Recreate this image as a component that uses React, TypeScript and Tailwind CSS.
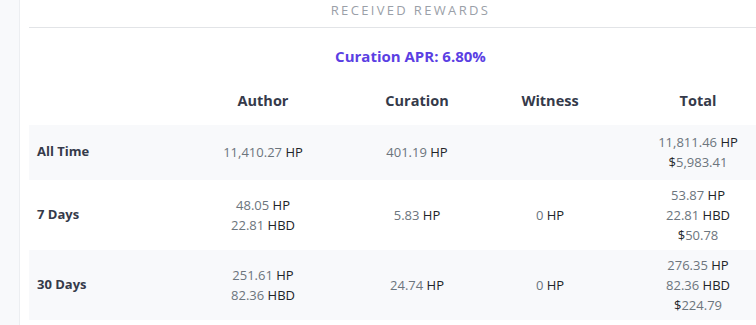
const rows = [
  {
    label: "All Time",
    h: "h-[55px]",
    bg: "bg-[#f8f9fb]",
    author: [["11,410.27", "HP"]],
    curation: [["401.19", "HP"]],
    witness: [],
    total: [["11,811.46", "HP"], ["$", "5,983.41"]],
  },
  {
    label: "7 Days",
    h: "h-[70px]",
    bg: "bg-white",
    author: [["48.05", "HP"], ["22.81", "HBD"]],
    curation: [["5.83", "HP"]],
    witness: [["0", "HP"]],
    total: [["53.87", "HP"], ["22.81", "HBD"], ["$", "50.78"]],
  },
  {
    label: "30 Days",
    h: "h-[70px]",
    bg: "bg-[#f8f9fb]",
    author: [["251.61", "HP"], ["82.36", "HBD"]],
    curation: [["24.74", "HP"]],
    witness: [["0", "HP"]],
    total: [["276.35", "HP"], ["82.36", "HBD"], ["$", "224.79"]],
  },
];

function Amounts({ items }: { items: string[][] }) {
  return (
    <div className="flex flex-col items-center leading-[20px]">
      {items.map(([a, b], i) =>
        a === "$" ? (
          <div key={i}>
            <span className="text-[#212529]">$</span>
            <span className="text-[#6c757d]">{b}</span>
          </div>
        ) : (
          <div key={i}>
            <span className="text-[#6c757d]">{a}</span> <span className="text-[#212529]">{b}</span>
          </div>
        )
      )}
    </div>
  );
}

export default function App() {
  return (
    <div className="flex h-[325px] w-[756px] overflow-hidden bg-white font-['Open_Sans',sans-serif]">
      <div className="w-[20px] shrink-0 border-r border-[#eceef1] bg-[#f8f9fb]" />
      <div className="ml-[9px] flex-1">
        <div className="flex h-[27px] items-start justify-center pt-[1px] text-[13px] tracking-[0.18em] text-[#9aa0a8]">
          RECEIVED REWARDS
        </div>
        <div className="h-px bg-[#e2e4e7]" />
        <div className="mt-[17px] text-center text-[15px] font-bold text-[#5b3fe3]">Curation APR: 6.80%</div>
        <div className="mt-[22px] flex h-[35px] items-start text-[14.5px] font-bold text-[#353a4a]">
          <div className="w-[159px]" />
          <div className="w-[150px] text-center">Author</div>
          <div className="w-[158px] text-center">Curation</div>
          <div className="w-[108px] text-center">Witness</div>
          <div className="w-[188px] text-center">Total</div>
        </div>
        <div className="text-[13px]">
          {rows.map((r) => (
            <div key={r.label} className={`flex items-center ${r.h} ${r.bg}`}>
              <div className="w-[159px] pl-[8px] font-bold text-[#353a4a]">{r.label}</div>
              <div className="w-[150px]"><Amounts items={r.author} /></div>
              <div className="w-[158px]"><Amounts items={r.curation} /></div>
              <div className="w-[108px]"><Amounts items={r.witness} /></div>
              <div className="w-[188px]"><Amounts items={r.total} /></div>
            </div>
          ))}
        </div>
      </div>
    </div>
  );
}
